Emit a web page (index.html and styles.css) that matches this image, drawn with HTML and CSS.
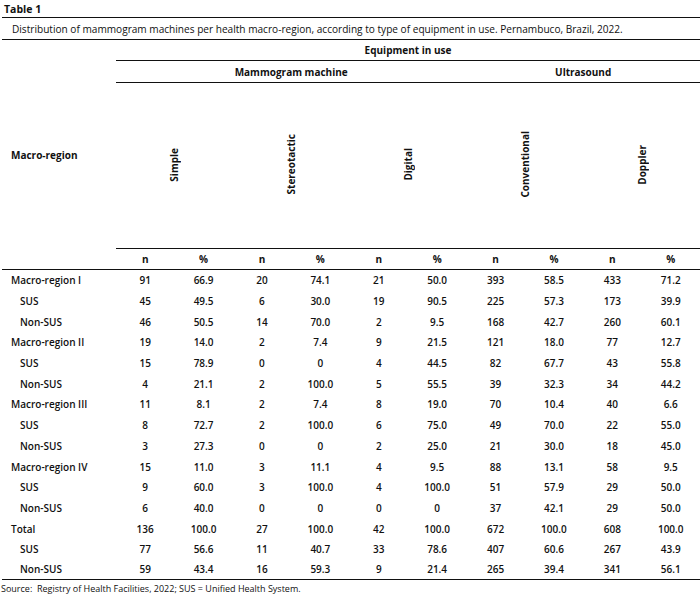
FILE: index.html
```html
<!DOCTYPE html>
<html>
<head>
<meta charset="utf-8">
<link rel="stylesheet" href="styles.css">
</head>
<body>
<div class="title">Table 1</div>
<div class="caption">Distribution of mammogram machines per health macro-region, according to type of equipment in use. Pernambuco, Brazil, 2022.</div>
<table class="tbl">
  <colgroup>
    <col class="c-label">
    <col><col><col><col><col><col><col><col><col><col>
  </colgroup>
  <thead>
    <tr class="h1">
      <th class="mr" rowspan="4">Macro-region</th>
      <th class="line" colspan="10">Equipment in use</th>
    </tr>
    <tr class="h2">
      <th class="line" colspan="6">Mammogram machine</th>
      <th class="line" colspan="4">Ultrasound</th>
    </tr>
    <tr class="h3">
      <th class="line" colspan="2"><span class="rot">Simple</span></th>
      <th class="line" colspan="2"><span class="rot">Stereotactic</span></th>
      <th class="line" colspan="2"><span class="rot">Digital</span></th>
      <th class="line" colspan="2"><span class="rot">Conventional</span></th>
      <th class="line" colspan="2"><span class="rot">Doppler</span></th>
    </tr>
    <tr class="h4">
      <th class="line">n</th><th class="line">%</th>
      <th class="line">n</th><th class="line">%</th>
      <th class="line">n</th><th class="line">%</th>
      <th class="line">n</th><th class="line">%</th>
      <th class="line">n</th><th class="line">%</th>
    </tr>
  </thead>
  <tbody>
    <tr><td class="lab">Macro-region I</td><td>91</td><td>66.9</td><td>20</td><td>74.1</td><td>21</td><td>50.0</td><td>393</td><td>58.5</td><td>433</td><td>71.2</td></tr>
    <tr><td class="lab sub">SUS</td><td>45</td><td>49.5</td><td>6</td><td>30.0</td><td>19</td><td>90.5</td><td>225</td><td>57.3</td><td>173</td><td>39.9</td></tr>
    <tr><td class="lab sub">Non-SUS</td><td>46</td><td>50.5</td><td>14</td><td>70.0</td><td>2</td><td>9.5</td><td>168</td><td>42.7</td><td>260</td><td>60.1</td></tr>
    <tr><td class="lab">Macro-region II</td><td>19</td><td>14.0</td><td>2</td><td>7.4</td><td>9</td><td>21.5</td><td>121</td><td>18.0</td><td>77</td><td>12.7</td></tr>
    <tr><td class="lab sub">SUS</td><td>15</td><td>78.9</td><td>0</td><td>0</td><td>4</td><td>44.5</td><td>82</td><td>67.7</td><td>43</td><td>55.8</td></tr>
    <tr><td class="lab sub">Non-SUS</td><td>4</td><td>21.1</td><td>2</td><td>100.0</td><td>5</td><td>55.5</td><td>39</td><td>32.3</td><td>34</td><td>44.2</td></tr>
    <tr><td class="lab">Macro-region III</td><td>11</td><td>8.1</td><td>2</td><td>7.4</td><td>8</td><td>19.0</td><td>70</td><td>10.4</td><td>40</td><td>6.6</td></tr>
    <tr><td class="lab sub">SUS</td><td>8</td><td>72.7</td><td>2</td><td>100.0</td><td>6</td><td>75.0</td><td>49</td><td>70.0</td><td>22</td><td>55.0</td></tr>
    <tr><td class="lab sub">Non-SUS</td><td>3</td><td>27.3</td><td>0</td><td>0</td><td>2</td><td>25.0</td><td>21</td><td>30.0</td><td>18</td><td>45.0</td></tr>
    <tr><td class="lab">Macro-region IV</td><td>15</td><td>11.0</td><td>3</td><td>11.1</td><td>4</td><td>9.5</td><td>88</td><td>13.1</td><td>58</td><td>9.5</td></tr>
    <tr><td class="lab sub">SUS</td><td>9</td><td>60.0</td><td>3</td><td>100.0</td><td>4</td><td>100.0</td><td>51</td><td>57.9</td><td>29</td><td>50.0</td></tr>
    <tr><td class="lab sub">Non-SUS</td><td>6</td><td>40.0</td><td>0</td><td>0</td><td>0</td><td>0</td><td>37</td><td>42.1</td><td>29</td><td>50.0</td></tr>
    <tr><td class="lab">Total</td><td>136</td><td>100.0</td><td>27</td><td>100.0</td><td>42</td><td>100.0</td><td>672</td><td>100.0</td><td>608</td><td>100.0</td></tr>
    <tr><td class="lab sub">SUS</td><td>77</td><td>56.6</td><td>11</td><td>40.7</td><td>33</td><td>78.6</td><td>407</td><td>60.6</td><td>267</td><td>43.9</td></tr>
    <tr class="last"><td class="lab sub">Non-SUS</td><td>59</td><td>43.4</td><td>16</td><td>59.3</td><td>9</td><td>21.4</td><td>265</td><td>39.4</td><td>341</td><td>56.1</td></tr>
  </tbody>
</table>
<div class="source">Source:&nbsp; Registry of Health Facilities, 2022; SUS = Unified Health System.</div>
</body>
</html>
```
FILE: styles.css
```css
html, body {
  margin: 0;
  padding: 0;
  background: #fff;
}
body {
  font-family: "Open Sans", "Liberation Sans", sans-serif;
  color: #111;
  width: 700px;
  height: 594px;
  overflow: hidden;
}
.title {
  box-sizing: border-box;
  height: 18px;
  margin-left: 2px;
  padding-left: 2px;
  padding-top: 2px;
  font-size: 10.5px;
  font-weight: 700;
  line-height: 14px;
  border-bottom: 1px solid #111;
}
.caption {
  box-sizing: border-box;
  height: 22px;
  margin-left: 2px;
  padding-left: 10px;
  padding-top: 4px;
  font-size: 10.1px;
  line-height: 14px;
  border-bottom: 1px solid #111;
}
.tbl {
  margin-left: 2px;
  width: 698px;
  table-layout: fixed;
  border-collapse: separate;
  border-spacing: 0;
  font-size: 10px;
}
.c-label {
  width: 114px;
}
.tbl th,
.tbl td {
  padding: 0;
  text-align: center;
  vertical-align: middle;
  line-height: 12px;
}
.tbl th {
  font-weight: 700;
}
.tbl td {
  font-weight: 600;
}
.tbl th.line {
  border-bottom: 1px solid #111;
}
.tbl th.mr {
  text-align: left;
  padding-left: 9px;
  border-bottom: 1px solid #111;
}
.h1 { height: 21px; }
.h2 { height: 22px; }
.h3 { height: 166px; }
.h4 { height: 21px; }
.tbl tbody tr { height: 20.7px; }
.tbl td.lab {
  text-align: left;
  padding-left: 9px;
}
.tbl td.lab.sub {
  padding-left: 18px;
}
.tbl tr.last td {
  border-bottom: 1px solid #111;
}
.rot {
  display: inline-block;
  writing-mode: vertical-rl;
  transform: rotate(180deg);
}
.source {
  margin-left: 1px;
  padding-top: 3px;
  font-size: 9px;
  line-height: 11px;
}
```
